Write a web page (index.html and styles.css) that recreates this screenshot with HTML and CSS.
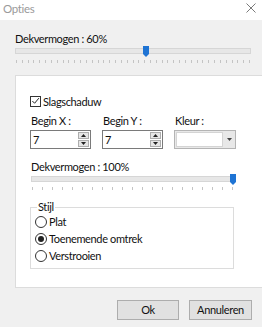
FILE: index.html
```html
<!DOCTYPE html>
<html>
<head>
<meta charset="utf-8">
<link rel="stylesheet" href="styles.css">
</head>
<body>
<div class="window">
  <div class="titlebar">
    <span class="title">Opties</span>
    <svg class="close" width="10" height="10" viewBox="0 0 10 10"><path d="M0.5 0.5 L9.5 9.5 M9.5 0.5 L0.5 9.5" stroke="#7a7a7a" stroke-width="1" fill="none"/></svg>
  </div>
  <div class="content">
    <div class="lbl first">Dekvermogen : 60%</div>
    <div class="slider s1">
      <div class="track"></div>
      <svg class="thumb" style="left:128px" width="6" height="11" viewBox="0 0 6 11"><polygon points="0,0 6,0 6,8 3,11 0,8" fill="#1f74d4"/></svg>
      <div class="ticks"></div>
    </div>
    <div class="panel">
      <div class="check">
        <span class="box"><svg width="10" height="10" viewBox="0 0 10 10"><path d="M1.5 5 L4 7.5 L8.8 1.8" stroke="#222" stroke-width="1.1" fill="none"/></svg></span>
        <span>Slagschaduw</span>
      </div>
      <div class="fields">
        <div class="field">
          <div class="lbl">Begin X :</div>
          <div class="spin"><span class="val">7</span><div class="spinbtns"><span class="sb"><svg width="5" height="3" viewBox="0 0 5 3"><polygon points="0,3 5,3 2.5,0" fill="#222"/></svg></span><span class="sb"><svg width="5" height="3" viewBox="0 0 5 3"><polygon points="0,0 5,0 2.5,3" fill="#222"/></svg></span></div></div>
        </div>
        <div class="field">
          <div class="lbl">Begin Y :</div>
          <div class="spin"><span class="val">7</span><div class="spinbtns"><span class="sb"><svg width="5" height="3" viewBox="0 0 5 3"><polygon points="0,3 5,3 2.5,0" fill="#222"/></svg></span><span class="sb"><svg width="5" height="3" viewBox="0 0 5 3"><polygon points="0,0 5,0 2.5,3" fill="#222"/></svg></span></div></div>
        </div>
        <div class="field">
          <div class="lbl">Kleur :</div>
          <div class="combo"><span class="cfield"></span><span class="carrow"><svg width="5" height="3" viewBox="0 0 5 3"><polygon points="0,0 5,0 2.5,3" fill="#444"/></svg></span></div>
        </div>
      </div>
      <div class="lbl second">Dekvermogen : 100%</div>
      <div class="slider s2">
        <div class="track"></div>
        <svg class="thumb" style="left:199px" width="6" height="11" viewBox="0 0 6 11"><polygon points="0,0 6,0 6,8 3,11 0,8" fill="#1f74d4"/></svg>
        <div class="ticks"></div>
      </div>
      <div class="group">
        <span class="legend">Stijl</span>
        <div class="radio"><span class="circle"></span><span>Plat</span></div>
        <div class="radio"><span class="circle on"></span><span>Toenemende omtrek</span></div>
        <div class="radio"><span class="circle"></span><span>Verstrooien</span></div>
      </div>
    </div>
    <div class="buttons">
      <div class="btn ok">Ok</div>
      <div class="btn cancel">Annuleren</div>
    </div>
  </div>
</div>
</body>
</html>
```
FILE: styles.css
```css
html, body {
  margin: 0;
  padding: 0;
  background: #f0f0f0;
}
body {
  font-family: Lato, "Noto Sans", sans-serif;
  font-size: 11px;
  letter-spacing: -0.35px;
  color: #111;
}
.window {
  width: 262px;
  height: 327px;
  background: #f0f0f0;
}
.titlebar {
  height: 20px;
  background: #fff;
  display: flex;
  align-items: center;
  justify-content: space-between;
  padding: 0 6px 0 3px;
}
.title {
  color: #9a9a9a;
  font-size: 11.5px;
  line-height: 16px;
  margin-top: -2px;
}
.close {
  margin-top: -4px;
}
.content {
  padding: 0 10px 0 15px;
}
.lbl {
  line-height: 14px;
  height: 14px;
  white-space: nowrap;
}
.lbl.first {
  margin-top: 12px;
}
.slider {
  position: relative;
  height: 17px;
}
.slider .track {
  position: absolute;
  left: 0;
  right: 0;
  top: 2px;
  height: 4px;
  background: #e7e7e7;
  border: 1px solid #d6d6d6;
}
.slider .thumb {
  position: absolute;
  top: 0;
}
.slider .ticks {
  position: absolute;
  top: 14px;
  height: 3px;
}
.s1 {
  width: 236px;
}
.s1 .ticks {
  left: 1px;
  width: 235px;
  background: repeating-linear-gradient(to right, #c4c4c4 0 1px, transparent 1px 5.825px);
}
.panel {
  margin-top: 12px;
  width: 233px;
  background: #fff;
  border: 1px solid #dcdcdc;
  padding: 18px 0 18px 14px;
}
.check {
  display: flex;
  align-items: center;
  height: 14px;
}
.box {
  width: 11px;
  height: 11px;
  border: 1px solid #333;
  box-sizing: border-box;
  display: flex;
  align-items: center;
  justify-content: center;
  margin-right: 2px;
}
.fields {
  display: flex;
  gap: 11px;
  margin-top: 6px;
}
.field .lbl {
  margin-left: 1px;
  margin-bottom: 2px;
}
.spin {
  width: 61px;
  height: 19px;
  box-sizing: border-box;
  border: 1px solid #7a7a7a;
  display: flex;
  justify-content: space-between;
}
.spin .val {
  padding-left: 2px;
  line-height: 17px;
}
.spinbtns {
  display: flex;
  flex-direction: column;
  gap: 1px;
  padding: 1px 1px 1px 0;
}
.sb {
  width: 9px;
  height: 7px;
  background: #e6e6e6;
  border: 1px solid #adadad;
  box-sizing: content-box;
  display: flex;
  align-items: center;
  justify-content: center;
}
.combo {
  width: 62px;
  height: 19px;
  box-sizing: border-box;
  border: 1px solid #b4b4b4;
  background: #e8e8e8;
  display: flex;
  padding: 1px;
  gap: 1px;
}
.cfield {
  flex: 1;
  background: #fff;
  border: 1px solid #d4d4d4;
}
.carrow {
  width: 10px;
  display: flex;
  align-items: center;
  justify-content: center;
}
.lbl.second {
  margin-top: 11px;
  margin-left: 1px;
}
.s2 {
  width: 202px;
  margin-left: 1px;
}
.s2 .track {
  top: 2px;
}
.s2 .ticks {
  top: 13px;
  left: 1px;
  width: 201px;
  background: repeating-linear-gradient(to right, #c4c4c4 0 1px, transparent 1px 10px);
}
.group {
  position: relative;
  margin-top: 16px;
  width: 204px;
  border: 1px solid #dcdcdc;
  padding: 5px 0 3px 4px;
  box-sizing: border-box;
  height: 62px;
}
.legend {
  position: absolute;
  top: -8px;
  left: 6px;
  background: #fff;
  padding: 0 1px;
  line-height: 14px;
}
.radio {
  display: flex;
  align-items: center;
  height: 17px;
}
.circle {
  width: 12px;
  height: 12px;
  border: 1px solid #333;
  border-radius: 50%;
  box-sizing: border-box;
  margin-right: 2px;
  display: flex;
  align-items: center;
  justify-content: center;
}
.circle.on::after {
  content: "";
  width: 6px;
  height: 6px;
  border-radius: 50%;
  background: #222;
}
.buttons {
  display: flex;
  justify-content: flex-end;
  gap: 10px;
  margin-top: 12px;
}
.btn {
  height: 20px;
  box-sizing: border-box;
  border: 1px solid #adadad;
  background: #e1e1e1;
  text-align: center;
  line-height: 18px;
}
.btn.ok {
  width: 62px;
}
.btn.cancel {
  width: 63px;
}
```
